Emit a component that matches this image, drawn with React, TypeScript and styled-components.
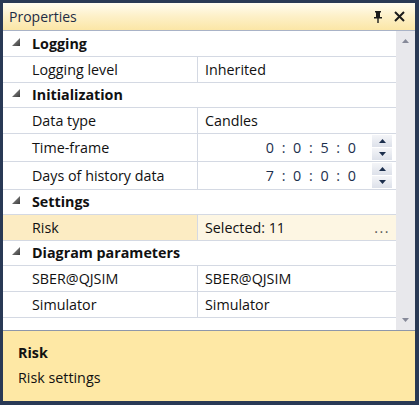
import { createGlobalStyle } from 'styled-components';
import styled from 'styled-components';

const GlobalStyle = createGlobalStyle`
  html, body {
    margin: 0;
    padding: 0;
    background: #293955;
  }
  * {
    box-sizing: border-box;
  }
`;

interface rowItem {
  label: string;
  value: string;
  kind?: 'text' | 'spin' | 'picker';
  selected?: boolean;
}

interface categoryItem {
  title: string;
  rows: rowItem[];
}

const categories: categoryItem[] = [
  { title: 'Logging', rows: [{ label: 'Logging level', value: 'Inherited' }] },
  {
    title: 'Initialization',
    rows: [
      { label: 'Data type', value: 'Candles' },
      { label: 'Time-frame', value: '0 : 0 : 5 : 0', kind: 'spin' },
      { label: 'Days of history data', value: '7 : 0 : 0 : 0', kind: 'spin' },
    ],
  },
  {
    title: 'Settings',
    rows: [{ label: 'Risk', value: 'Selected: 11', kind: 'picker', selected: true }],
  },
  {
    title: 'Diagram parameters',
    rows: [
      { label: 'SBER@QJSIM', value: 'SBER@QJSIM' },
      { label: 'Simulator', value: 'Simulator' },
    ],
  },
];

function PinIcon() {
  return (
    <svg width="10" height="12" viewBox="0 0 10 12">
      <rect x="2" y="0" width="6" height="1.5" fill="#1b1b1b" />
      <rect x="3" y="1" width="3" height="6" fill="#1b1b1b" />
      <rect x="6" y="1" width="1" height="6" fill="#1b1b1b" />
      <rect x="1" y="6" width="8" height="1.5" fill="#1b1b1b" />
      <rect x="4.3" y="7" width="1.4" height="5" fill="#1b1b1b" />
    </svg>
  );
}

function CloseIcon() {
  return (
    <svg width="11" height="11" viewBox="0 0 11 11">
      <path d="M1 1 L10 10 M10 1 L1 10" stroke="#1b1b1b" strokeWidth="2" />
    </svg>
  );
}

function Expander() {
  return (
    <svg width="8" height="8" viewBox="0 0 8 8">
      <defs>
        <linearGradient id="exp" x1="0" y1="0" x2="1" y2="1">
          <stop offset="0" stopColor="#9a9a9a" />
          <stop offset="1" stopColor="#3c3c3c" />
        </linearGradient>
      </defs>
      <path d="M8 0 L8 8 L0 8 Z" fill="url(#exp)" />
    </svg>
  );
}

function Arrow({ up, color = '#1c2f4d' }: { up: boolean; color?: string }) {
  return (
    <svg width="7" height="4" viewBox="0 0 7 4">
      <path d={up ? 'M0 4 L3.5 0 L7 4 Z' : 'M0 0 L7 0 L3.5 4 Z'} fill={color} />
    </svg>
  );
}

function Spinner() {
  return (
    <SpinBox>
      <SpinButton>
        <Arrow up />
      </SpinButton>
      <SpinButton>
        <Arrow up={false} />
      </SpinButton>
    </SpinBox>
  );
}

export default function App() {
  return (
    <>
      <GlobalStyle />
      <Window>
        <Panel>
          <TitleBar>
            <TitleText>Properties</TitleText>
            <TitleButtons>
              <PinIcon />
              <CloseIcon />
            </TitleButtons>
          </TitleBar>
          <GridArea>
            <Grid>
              {categories.map((cat) => (
                <div key={cat.title}>
                  <CategoryRow>
                    <ExpanderCell>
                      <Expander />
                    </ExpanderCell>
                    {cat.title}
                  </CategoryRow>
                  {cat.rows.map((row) => (
                    <PropRow key={row.label} tall={row.kind === 'spin'}>
                      <LabelCell selected={row.selected}>{row.label}</LabelCell>
                      <ValueCell selected={row.selected}>
                        {row.kind === 'spin' ? (
                          <>
                            <SpinValue>{row.value}</SpinValue>
                            <Spinner />
                          </>
                        ) : (
                          <>
                            <ValueText>{row.value}</ValueText>
                            {row.kind === 'picker' && <Dots>...</Dots>}
                          </>
                        )}
                      </ValueCell>
                    </PropRow>
                  ))}
                </div>
              ))}
            </Grid>
            <ScrollBar>
              <Arrow up color="#868999" />
              <Arrow up={false} color="#868999" />
            </ScrollBar>
          </GridArea>
          <Footer>
            <FooterTitle>Risk</FooterTitle>
            <FooterText>Risk settings</FooterText>
          </Footer>
        </Panel>
      </Window>
    </>
  );
}

const Window = styled.div`
  width: 419px;
  height: 405px;
  padding: 3px 4px 4px 3px;
  background: #293955;
  font-family: 'Open Sans', 'Noto Sans', sans-serif;
`;

const Panel = styled.div`
  display: flex;
  flex-direction: column;
  height: 100%;
  background: #ffffff;
`;

const TitleBar = styled.div`
  display: flex;
  align-items: center;
  justify-content: space-between;
  height: 28px;
  padding: 0 10px 0 6px;
  background: linear-gradient(#fffcf0, #fdf0c7 50%, #fbe6a6);
  border-bottom: 1px solid #a9b3c7;
`;

const TitleText = styled.span`
  font-size: 14px;
  color: #1e2c45;
`;

const TitleButtons = styled.div`
  display: flex;
  align-items: center;
  gap: 11px;
`;

const GridArea = styled.div`
  display: flex;
  flex: 1;
  min-height: 0;
`;

const Grid = styled.div`
  flex: 1;
  background: #ffffff;
`;

const CategoryRow = styled.div`
  display: flex;
  align-items: center;
  height: 25px;
  font-weight: 700;
  font-size: 14.3px;
  color: #111111;
`;

const ExpanderCell = styled.div`
  display: flex;
  align-items: center;
  justify-content: center;
  width: 29px;
  padding: 0 4px 4px 0;
`;

const PropRow = styled.div<{ tall?: boolean }>`
  display: grid;
  grid-template-columns: 195px 1fr;
  height: ${(p) => (p.tall ? '29px' : '27px')};
  border-top: 1px solid #d4d9e3;
  border-bottom: 1px solid #d4d9e3;
  margin-bottom: -1px;
  font-size: 14.3px;
  color: #111111;
`;

const LabelCell = styled.div<{ selected?: boolean }>`
  display: flex;
  align-items: center;
  padding-left: 29px;
  background: ${(p) => (p.selected ? '#fcecc3' : '#ffffff')};
  border-right: 1px solid #d4d9e3;
`;

const ValueCell = styled.div<{ selected?: boolean }>`
  display: flex;
  align-items: center;
  padding: 0 4px 0 7px;
  background: ${(p) => (p.selected ? '#fdf6e3' : '#ffffff')};
`;

const ValueText = styled.span`
  flex: 1;
`;

const SpinValue = styled.span`
  flex: 1;
  text-align: right;
  padding-right: 16px;
  color: #1c2f4d;
  word-spacing: 4px;
`;

const Dots = styled.span`
  color: #555555;
  letter-spacing: 1.5px;
  padding-right: 2px;
`;

const SpinBox = styled.div`
  display: flex;
  flex-direction: column;
  gap: 1px;
  width: 20px;
`;

const SpinButton = styled.div`
  display: flex;
  align-items: center;
  justify-content: center;
  height: 12px;
  background: linear-gradient(#f4f5f8, #dde1ea);
`;

const ScrollBar = styled.div`
  display: flex;
  flex-direction: column;
  align-items: center;
  justify-content: space-between;
  width: 19px;
  padding: 8px 0 8px;
  background: #e8e8ec;
`;

const Footer = styled.div`
  display: flex;
  flex-direction: column;
  gap: 6px;
  height: 71px;
  padding: 12px 15px 0;
  background: #fee8a5;
  border-top: 1px solid #8e97aa;
  color: #111111;
`;

const FooterTitle = styled.div`
  font-weight: 700;
  font-size: 14.3px;
`;

const FooterText = styled.div`
  font-size: 14.3px;
`;
